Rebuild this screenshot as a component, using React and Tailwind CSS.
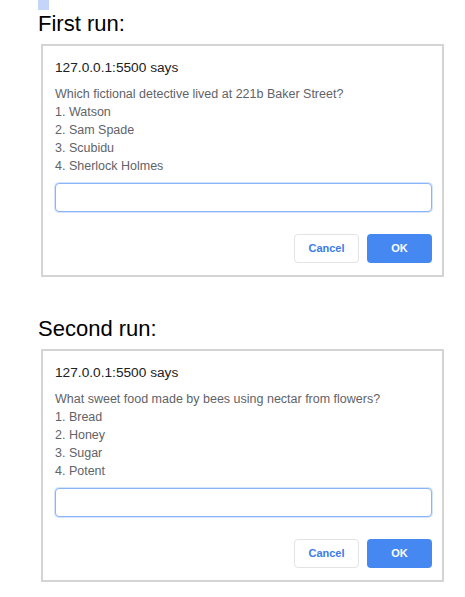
import React from "react";

function Dialog({ question, options }) {
  return (
    <div className="w-[403px] border-2 border-[#d4d4d4] bg-white pl-[12px] pr-[10px] pt-[12px] pb-[12px] font-['Liberation_Sans',Arial,sans-serif]">
      <div className="text-[13.7px] leading-[20px] text-[#202124]">127.0.0.1:5500 says</div>
      <div className="mt-[7px] text-[12.5px] leading-[18px] text-[#5f6368]">
        <div>{question}</div>
        {options.map((o, i) => (
          <div key={i}>{`${i + 1}. ${o}`}</div>
        ))}
      </div>
      <div className="mt-[8px] h-[29px] rounded-[4px] border border-[#8ab4f8] shadow-[0_0_0_1px_rgba(138,180,248,0.35)] bg-white"></div>
      <div className="mt-[22px] flex justify-end gap-[8px]">
        <div className="flex h-[29px] w-[65px] items-center justify-center rounded-[4px] border border-[#e3e3e3] bg-white text-[11px] font-bold text-[#3b7be8]">
          Cancel
        </div>
        <div className="flex h-[29px] w-[65px] items-center justify-center rounded-[4px] bg-[#4688f1] text-[11px] font-bold text-white">
          OK
        </div>
      </div>
    </div>
  );
}

export default function App() {
  return (
    <div className="min-h-[597px] w-[465px] bg-white pl-[38px] font-['Liberation_Sans',Arial,sans-serif]">
      <div className="h-[10px] w-[11px] bg-[#c3d6f9]"></div>
      <div className="mt-[1px] text-[22px] leading-[26px] text-black">First run:</div>
      <div className="mt-[7px] ml-[3px]">
        <Dialog
          question="Which fictional detective lived at 221b Baker Street?"
          options={["Watson", "Sam Spade", "Scubidu", "Sherlock Holmes"]}
        />
      </div>
      <div className="mt-[39px] text-[22px] leading-[26px] text-black">Second run:</div>
      <div className="mt-[7px] ml-[3px]">
        <Dialog
          question="What sweet food made by bees using nectar from flowers?"
          options={["Bread", "Honey", "Sugar", "Potent"]}
        />
      </div>
    </div>
  );
}
